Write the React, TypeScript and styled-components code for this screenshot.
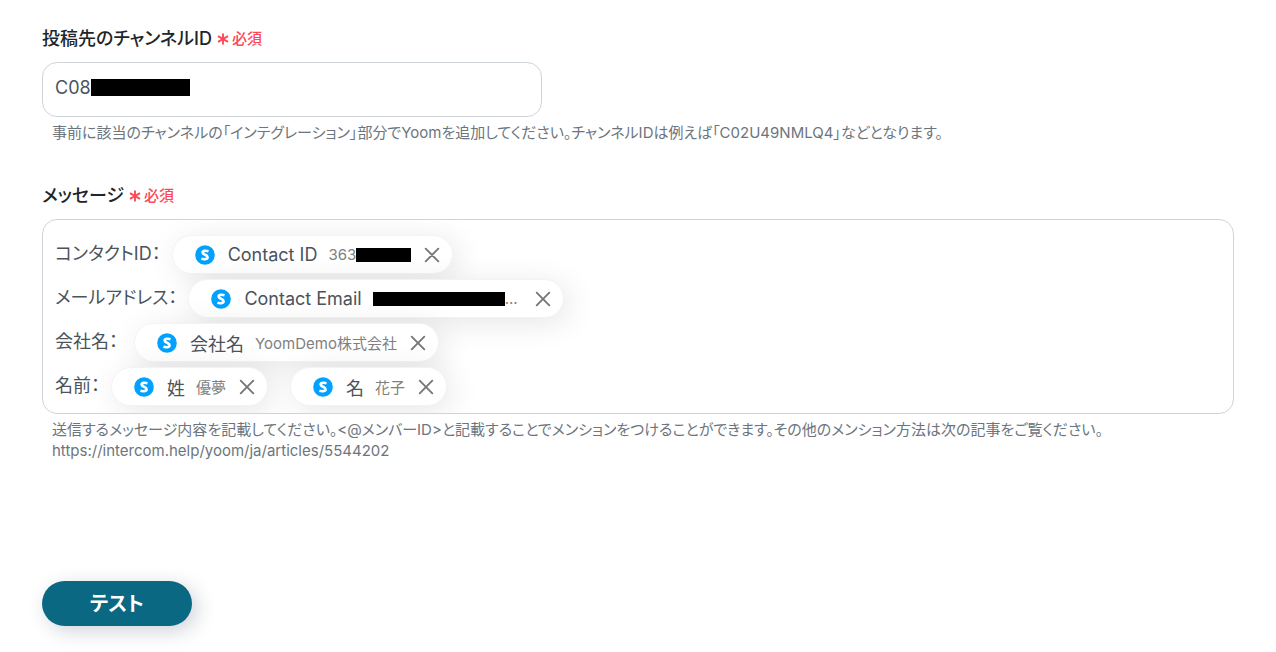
import React from "react";
import styled, { createGlobalStyle } from "styled-components";

const GlobalStyle = createGlobalStyle`
  *, *::before, *::after { box-sizing: border-box; }
  body {
    margin: 0;
    background: #fff;
    color: #4b535b;
    font-family: Inter, "Noto Sans CJK JP", sans-serif;
    font-size: 18px;
    font-feature-settings: "palt";
  }
`;

const Form = styled.form`
  padding: 24px 42px 26px;
`;

const Field = styled.div`
  margin-bottom: 38px;
`;

const LabelRow = styled.div`
  display: flex;
  align-items: center;
  gap: 5px;
  height: 28px;
  margin-bottom: 10px;
`;

const Label = styled.label`
  padding-top: 2px;
  color: #212529;
  font-size: 18px;
  line-height: 28px;
  font-weight: 500;
`;

const Required = styled.span`
  display: flex;
  align-items: center;
  gap: 3px;
  padding-top: 2px;
  color: #ff4757;
  font-size: 15px;
  line-height: 28px;
  font-weight: 500;
`;

const InputBox = styled.div`
  display: flex;
  align-items: center;
  max-width: 500px;
  height: 55px;
  padding: 0 12px 4px;
  border: 1px solid #ced4da;
  border-radius: 15px;
`;

const TextInput = styled.input`
  width: 36px;
  padding: 0;
  border: 0;
  outline: 0;
  background: none;
  color: inherit;
  font: inherit;
  line-height: 28px;
`;

const Redaction = styled.span<{ $width: number; $height: number }>`
  display: block;
  flex: none;
  width: ${(p) => p.$width}px;
  height: ${(p) => p.$height}px;
  background: #000;
`;

const Help = styled.p`
  margin: 5px 10px 0;
  color: #6c757d;
  font-size: 15px;
  line-height: 21px;
`;

const Editor = styled.div`
  display: flex;
  flex-direction: column;
  gap: 5px;
  padding: 15px 12px 7px;
  border: 1px solid #ced4da;
  border-radius: 15px;
  overflow: hidden;
`;

const Line = styled.div`
  display: flex;
  align-items: center;
  height: 39px;
`;

const LineText = styled.span`
  line-height: 28px;
  padding-bottom: 2px;
  white-space: pre;
`;

const Chip = styled.span`
  display: flex;
  align-items: center;
  height: 39px;
  padding: 0 12px 0 22px;
  margin-left: 11px;
  border: 1px solid #f3f3f3;
  border-radius: 20px;
  background: #fff;
  box-shadow: 5px 5px 30px rgba(0, 0, 0, 0.1);

  & + & {
    margin-left: 22px;
  }
`;

const ChipName = styled.span`
  margin: 0 11px 0 13px;
`;

const ChipValue = styled.span`
  display: flex;
  align-items: center;
  color: #808080;
  font-size: 15px;
  white-space: pre;
`;

const RemoveButton = styled.button`
  display: flex;
  margin-left: 13px;
  padding: 0;
  border: 0;
  background: none;
  color: #777;
`;

const SubmitButton = styled.button`
  display: block;
  width: 150px;
  height: 45px;
  margin-top: 120px;
  padding: 0 0 2px;
  border: 0;
  border-radius: 23px;
  background: #0b6882;
  color: #fff;
  font: inherit;
  font-size: 20px;
  font-weight: 700;
  font-feature-settings: inherit;
  box-shadow: 5px 5px 20px rgba(8, 35, 60, 0.2);
`;

const Asterisk = () => (
  <svg width="12" height="12" viewBox="0 0 12 12" aria-hidden="true">
    <path d="M6 .5v11M1 3.2l10 5.6M11 3.2L1 8.8" stroke="currentColor" strokeWidth="1.9" fill="none" />
  </svg>
);

const ServiceIcon = () => (
  <svg width="20" height="20" viewBox="0 0 20 20" aria-hidden="true">
    <circle cx="10" cy="10" r="9.8" fill="#00a1ff" />
    <path
      d="M13.5 6.2C11.6 5.7 7.6 5.3 7.6 7.5C7.6 9.9 12.6 9.7 12.6 12.2C12.6 14.6 8.6 14.4 6.4 13.8"
      stroke="#fff"
      strokeWidth="2.6"
      fill="none"
    />
  </svg>
);

const CloseIcon = () => (
  <svg width="16" height="16" viewBox="0 0 16 16" aria-hidden="true">
    <path d="M1.7 1.7l12.6 12.6M14.3 1.7L1.7 14.3" stroke="currentColor" strokeWidth="1.9" strokeLinecap="round" />
  </svg>
);

const RequiredMark = () => (
  <Required>
    <Asterisk />
    必須
  </Required>
);

const Token = ({ name, children }: { name: string; children: React.ReactNode }) => (
  <Chip>
    <ServiceIcon />
    <ChipName>{name}</ChipName>
    <ChipValue>{children}</ChipValue>
    <RemoveButton type="button" aria-label={`${name}を削除`}>
      <CloseIcon />
    </RemoveButton>
  </Chip>
);

export default function App() {
  return (
    <>
      <GlobalStyle />
      <Form>
        <Field>
          <LabelRow>
            <Label htmlFor="channel">投稿先のチャンネルID</Label>
            <RequiredMark />
          </LabelRow>
          <InputBox>
            <TextInput id="channel" type="text" defaultValue="C08" />
            <Redaction $width={99} $height={17} />
          </InputBox>
          <Help>
            事前に該当のチャンネルの「インテグレーション」部分でYoomを追加してください。チャンネルIDは例えば「C02U49NMLQ4」などとなります。
          </Help>
        </Field>
        <Field>
          <LabelRow>
            <Label as="span" id="message-label">メッセージ</Label>
            <RequiredMark />
          </LabelRow>
          <Editor role="group" aria-labelledby="message-label">
            <Line>
              <LineText>コンタクトID：</LineText>
              <Token name="Contact ID">
                363
                <Redaction $width={55} $height={14} />
              </Token>
            </Line>
            <Line>
              <LineText>メールアドレス：</LineText>
              <Token name="Contact Email">
                <Redaction $width={132} $height={14} />
                {"... "}
              </Token>
            </Line>
            <Line>
              <LineText>{"会社名： "}</LineText>
              <Token name="会社名">YoomDemo株式会社</Token>
            </Line>
            <Line>
              <LineText>名前：</LineText>
              <Token name="姓">優夢</Token>
              <Token name="名">花子</Token>
            </Line>
          </Editor>
          <Help>
            送信するメッセージ内容を記載してください。&lt;@メンバーID&gt;と記載することでメンションをつけることができます。その他のメンション方法は次の記事をご覧ください。
            <br />
            https://intercom.help/yoom/ja/articles/5544202
          </Help>
        </Field>
        <SubmitButton type="button">テスト</SubmitButton>
      </Form>
    </>
  );
}
